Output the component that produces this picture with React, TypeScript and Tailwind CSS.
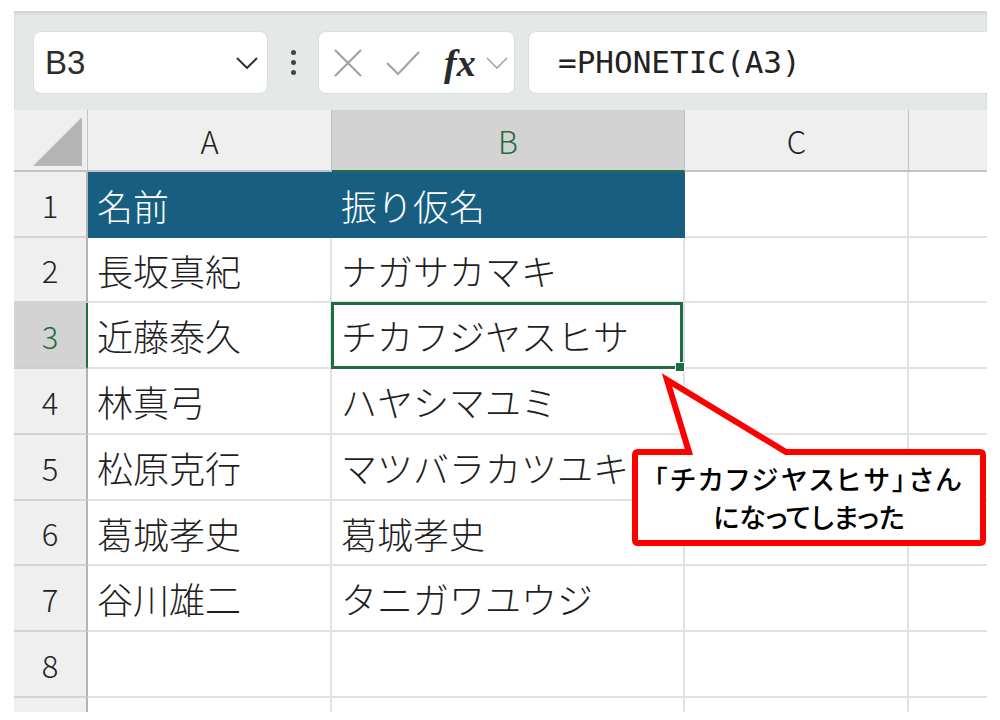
import React from "react";

const rows = [
  { n: "1", a: "名前", b: "振り仮名" },
  { n: "2", a: "長坂真紀", b: "ナガサカマキ" },
  { n: "3", a: "近藤泰久", b: "チカフジヤスヒサ" },
  { n: "4", a: "林真弓", b: "ハヤシマユミ" },
  { n: "5", a: "松原克行", b: "マツバラカツユキ" },
  { n: "6", a: "葛城孝史", b: "葛城孝史" },
  { n: "7", a: "谷川雄二", b: "タニガワユウジ" },
  { n: "8", a: "", b: "" },
];

function Chevron({ className }: { className?: string }) {
  return (
    <svg width="22" height="12" viewBox="0 0 22 12" className={className}>
      <polyline points="1,1 11,11 21,1" fill="none" stroke="currentColor" strokeWidth="2" />
    </svg>
  );
}

export default function App() {
  return (
    <div className="relative h-[720px] w-[1000px] overflow-hidden bg-white pl-[14px] pt-[11px] font-['Noto_Sans_CJK_JP',sans-serif] text-[#1f1f1f]">
      <div className="w-[973px]">
        {/* formula bar */}
        <div className="flex h-[99px] items-start bg-[#e4e9e7] pl-[19px] pt-[20px] shadow-[inset_0_3px_3px_rgba(0,0,0,0.08)]">
          <div className="flex h-[63px] w-[235px] items-center justify-between rounded-lg border border-[#dadedd] bg-white pl-[11px] pr-[9px]">
            <span className="font-['Liberation_Sans',sans-serif] text-[33px] text-[#2d2d2d]">B3</span>
            <Chevron className="text-[#333]" />
          </div>
          <div className="flex h-[63px] w-[50px] flex-col items-center justify-center gap-[5px]">
            <span className="h-[5px] w-[5px] rounded-full bg-[#444]" />
            <span className="h-[5px] w-[5px] rounded-full bg-[#444]" />
            <span className="h-[5px] w-[5px] rounded-full bg-[#444]" />
          </div>
          <div className="flex h-[63px] w-[197px] items-center rounded-lg border border-[#dadedd] bg-white pl-[14px]">
            <svg width="30" height="30" viewBox="0 0 30 30">
              <path d="M2 2 L28 28 M28 2 L2 28" stroke="#a3a3a3" strokeWidth="2.2" />
            </svg>
            <svg width="34" height="26" viewBox="0 0 34 26" className="ml-[23px]">
              <polyline points="1,13 12,24 33,2" fill="none" stroke="#a3a3a3" strokeWidth="2.2" />
            </svg>
            <span className="ml-[24px] font-['Liberation_Serif',serif] text-[38px] font-bold italic leading-none text-[#2a2a2a]">fx</span>
            <svg width="22" height="12" viewBox="0 0 22 12" className="ml-[10px]">
              <polyline points="1,1 11,11 21,1" fill="none" stroke="#a3a3a3" strokeWidth="1.6" />
            </svg>
          </div>
          <div className="ml-[13px] flex h-[63px] flex-1 items-center rounded-l-lg border border-r-0 border-[#dadedd] bg-white pl-[29px]">
            <span className="font-['DejaVu_Sans_Mono',monospace] text-[31px] text-[#222]">=PHONETIC(A3)</span>
          </div>
        </div>

        {/* sheet */}
        <div className="grid grid-cols-[74px_244px_353px_224px_78px] grid-rows-[62px_66px_65px_66px_66px_66px_65px_66px_66px_14px] text-[36px] font-light leading-none">
          <div className="relative border-b-2 border-r border-[#c2c2c2] bg-[#efefef]">
            <svg width="74" height="62" className="absolute left-0 top-0">
              <polygon points="68,7 68,56 19,56" fill="#b5b5b5" />
            </svg>
          </div>
          <div className="flex items-center justify-center border-b-2 border-r border-[#c2c2c2] bg-[#efefef] text-[31px] text-[#222]">A</div>
          <div className="flex items-center justify-center border-b-2 border-r border-b-[#1e6e42] border-r-[#c2c2c2] bg-[#d3d3d3] text-[31px] text-[#1e6e42]">B</div>
          <div className="flex items-center justify-center border-b-2 border-r border-[#c2c2c2] bg-[#efefef] text-[31px] text-[#222]">C</div>
          <div className="border-b-2 border-[#c2c2c2] bg-[#efefef]" />

          {rows.map((r) => {
            const sel = r.n === "3";
            const head = r.n === "1";
            return (
              <React.Fragment key={r.n}>
                {sel ? (
                  <div className="flex items-center justify-center border-b-2 border-r-2 border-b-[#cfcfcf] border-r-[#1e6e42] bg-[#d3d3d3] text-[31px] text-[#1e6e42]">{r.n}</div>
                ) : (
                  <div className="flex items-center justify-center border-b-2 border-r-2 border-b-[#d3d3d3] border-r-[#b3b3b3] bg-[#efefef] text-[31px] text-[#222]">{r.n}</div>
                )}
                {head ? (
                  <div className="flex items-center bg-[#175e80] pl-[9px] text-white">{r.a}</div>
                ) : (
                  <div className="flex items-center border-b-2 border-r-2 border-[#e2e2e2] pl-[9px]">{r.a}</div>
                )}
                {head ? (
                  <div className="flex items-center bg-[#175e80] pl-[9px] text-white">{r.b}</div>
                ) : (
                  <div className="relative flex items-center whitespace-nowrap border-b-2 border-r-2 border-[#e2e2e2] pl-[9px]">
                    {r.b}
                    {sel && (
                      <div className="absolute -bottom-[2px] -left-[1px] right-0 -top-[1px] z-10 border-[3px] border-[#1e6e42]">
                        <div className="absolute -bottom-[6px] -right-[5px] h-[10px] w-[10px] border border-white bg-[#1e6e42]" />
                      </div>
                    )}
                  </div>
                )}
                <div className="border-b-2 border-r-2 border-[#e2e2e2]" />
                <div className="border-b-2 border-[#e2e2e2]" />
              </React.Fragment>
            );
          })}

          <div className="border-r-2 border-[#b3b3b3] bg-[#efefef]" />
          <div className="border-r-2 border-[#e2e2e2]" />
          <div className="border-r-2 border-[#e2e2e2]" />
          <div className="border-r-2 border-[#e2e2e2]" />
          <div />
        </div>
      </div>

      {/* callout */}
      <div className="absolute left-[626px] top-[366px] z-20 h-[186px] w-[366px]">
        <svg width="366" height="186" className="absolute left-0 top-0">
          <path
            d="M63 86 L41 14 L160 86 L354 86 Q357 86 357 89 L357 174 Q357 177 354 177 L12 177 Q9 177 9 174 L9 89 Q9 86 12 86 Z"
            fill="#ffffff"
            stroke="#ff0000"
            strokeWidth="6"
          />
        </svg>
        <div className="absolute left-[12px] top-[89px] flex h-[85px] w-[342px] flex-col items-center justify-center text-[27px] font-medium leading-[38px] text-black [font-feature-settings:'palt']">
          <span className="tracking-[3px]">「チカフジヤスヒサ」さん</span>
          <span>になってしまった</span>
        </div>
      </div>
    </div>
  );
}
